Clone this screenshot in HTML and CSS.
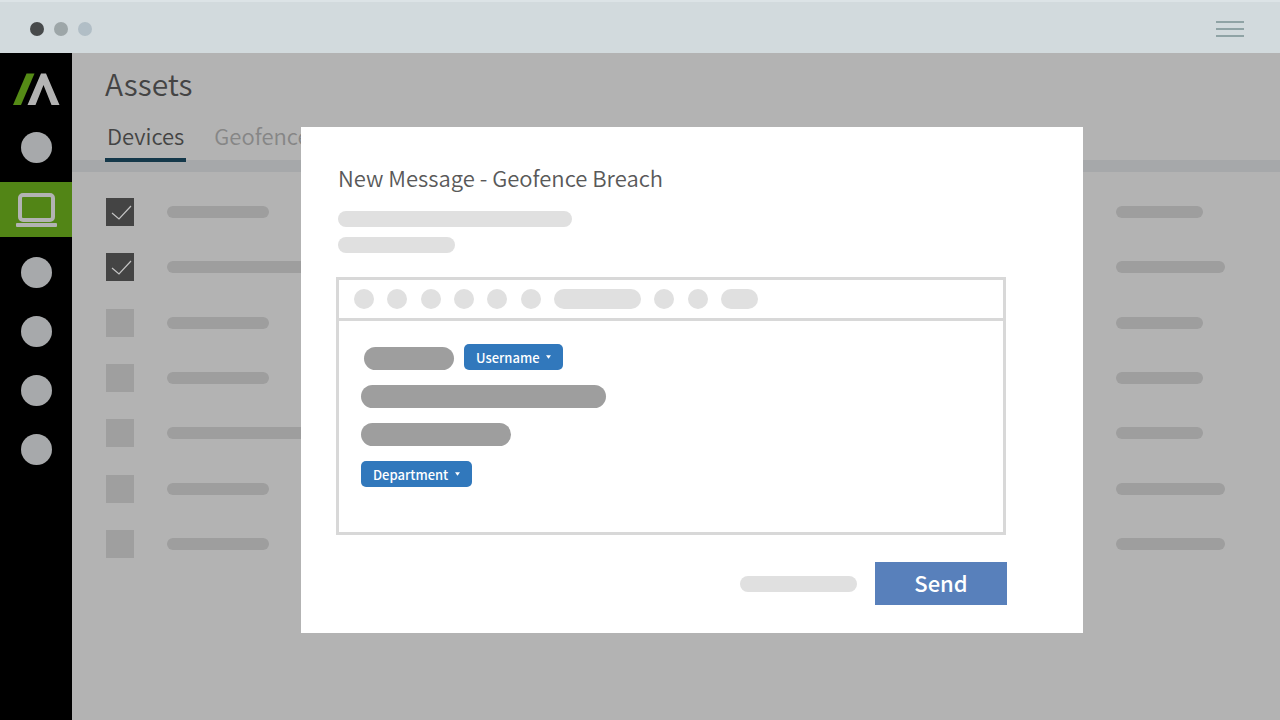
FILE: index.html
```html
<!DOCTYPE html>
<html lang="en">
<head>
<meta charset="utf-8">
<meta name="viewport" content="width=device-width, initial-scale=1">
<title>Assets</title>
<link rel="stylesheet" href="styles.css">
</head>
<body>
<header class="window-bar">
  <div class="window-dots">
    <span class="window-dot window-dot-dark"></span>
    <span class="window-dot window-dot-mid"></span>
    <span class="window-dot window-dot-light"></span>
  </div>
  <button class="menu-button" type="button" aria-label="Menu"><span></span><span></span><span></span></button>
</header>
<div class="app">
  <nav class="sidebar" aria-label="Main">
    <svg class="logo" viewBox="0 0 48 32" aria-hidden="true">
      <path fill="#558b16" d="M14.500 0.500h8L9 32H1z"/>
      <path fill="#b3b3b3" d="M29 0.500h5L47.500 32h-8L31.500 12 23.500 32h-8z"/>
    </svg>
    <a class="nav-dot" href="#" aria-label="Home"></a>
    <a class="nav-active" href="#" aria-label="Devices" aria-current="page">
      <svg class="laptop" viewBox="0 0 42 36" aria-hidden="true">
        <rect x="5" y="3" width="33" height="25" rx="3" fill="none" stroke="#b3b3b3" stroke-width="4"/>
        <rect x="1" y="31" width="41" height="4" rx="1" fill="#b3b3b3"/>
      </svg>
    </a>
    <div class="nav-group">
      <a class="nav-dot" href="#" aria-label="Reports"></a>
      <a class="nav-dot" href="#" aria-label="Policies"></a>
      <a class="nav-dot" href="#" aria-label="Users"></a>
      <a class="nav-dot" href="#" aria-label="Settings"></a>
    </div>
  </nav>
  <main class="page">
    <h1 class="page-title">Assets</h1>
    <div class="tabs">
      <a class="tab tab-current" href="#">Devices</a>
      <a class="tab" href="#">Geofence</a>
    </div>
    <div class="divider"></div>
    <ul class="rows">
      <li class="row"><span class="check"><input type="checkbox" aria-label="Device 1" checked><svg viewBox="0 0 28 28" aria-hidden="true"><path d="M6 15l7 6L25 8"/></svg></span><span class="bar bar-short"></span><span class="bar bar-end"></span></li>
      <li class="row"><span class="check"><input type="checkbox" aria-label="Device 2" checked><svg viewBox="0 0 28 28" aria-hidden="true"><path d="M6 15l7 6L25 8"/></svg></span><span class="bar bar-long"></span><span class="bar bar-end-long"></span></li>
      <li class="row"><span class="check"><input type="checkbox" aria-label="Device 3"></span><span class="bar bar-short"></span><span class="bar bar-end"></span></li>
      <li class="row"><span class="check"><input type="checkbox" aria-label="Device 4"></span><span class="bar bar-short"></span><span class="bar bar-end"></span></li>
      <li class="row"><span class="check"><input type="checkbox" aria-label="Device 5"></span><span class="bar bar-long"></span><span class="bar bar-end"></span></li>
      <li class="row"><span class="check"><input type="checkbox" aria-label="Device 6"></span><span class="bar bar-short"></span><span class="bar bar-end-long"></span></li>
      <li class="row"><span class="check"><input type="checkbox" aria-label="Device 7"></span><span class="bar bar-short"></span><span class="bar bar-end-long"></span></li>
    </ul>
    <div class="overlay">
      <section class="dialog" role="dialog" aria-labelledby="dialog-title">
        <h2 class="dialog-title" id="dialog-title">New Message - Geofence Breach</h2>
        <div class="summary">
          <span class="line line-wide"></span>
          <span class="line line-narrow"></span>
        </div>
        <div class="editor">
          <div class="toolbar">
            <div class="tools">
              <span class="tool"></span><span class="tool"></span><span class="tool"></span>
              <span class="tool"></span><span class="tool"></span><span class="tool"></span>
              <span class="tool tool-wide"></span>
              <span class="tool"></span><span class="tool"></span>
              <span class="tool tool-medium"></span>
            </div>
          </div>
          <div class="message">
            <div class="message-row">
              <span class="words words-greeting"></span>
              <span class="token"><select class="token-username" aria-label="First field"><option>Username</option></select><svg class="caret" viewBox="0 0 6 4" aria-hidden="true"><path d="M0 0h6L3 4z"/></svg></span>
            </div>
            <span class="words words-long"></span>
            <span class="words words-medium"></span>
            <span class="token"><select class="token-department" aria-label="Second field"><option>Department</option></select><svg class="caret" viewBox="0 0 6 4" aria-hidden="true"><path d="M0 0h6L3 4z"/></svg></span>
          </div>
        </div>
        <div class="actions">
          <span class="line line-narrow"></span>
          <button class="send" type="button">Send</button>
        </div>
      </section>
    </div>
  </main>
</div>
</body>
</html>
```
FILE: styles.css
```css
* {
  box-sizing: border-box;
}

body {
  margin: 0;
  min-height: 100vh;
  display: flex;
  flex-direction: column;
  font-family: "Noto Sans CJK SC", "Noto Sans", sans-serif;
  background: #b3b3b3;
}

.window-bar {
  display: flex;
  align-items: center;
  justify-content: space-between;
  height: 53px;
  padding: 2px 36px 0 30px;
  border-top: 2px solid #dce3e6;
  background: #d2dadd;
}

.window-dots {
  display: flex;
  gap: 10px;
}

.window-dot {
  width: 14px;
  height: 14px;
  border-radius: 50%;
}

.window-dot-dark { background: #474a4b; }
.window-dot-mid { background: #9da6a8; }
.window-dot-light { background: #b1bec6; }

.menu-button {
  display: flex;
  flex-direction: column;
  gap: 5px;
  width: 28px;
  padding: 0;
  border: 0;
  background: none;
}

.menu-button span {
  height: 2px;
  background: #8fa3a5;
}

.app {
  display: flex;
  flex: 1;
}

.sidebar {
  display: flex;
  flex-direction: column;
  align-items: center;
  width: 72px;
  padding-top: 20px;
  background: #000;
}

.logo {
  width: 48px;
  height: 32px;
  margin-bottom: 27px;
}

.nav-dot {
  width: 31px;
  height: 31px;
  border-radius: 50%;
  background: #a7a9ab;
}

.nav-active {
  display: flex;
  align-items: center;
  justify-content: center;
  align-self: stretch;
  height: 55px;
  margin: 19px 0 20px;
  background: #528516;
}

.laptop {
  width: 42px;
  height: 36px;
}

.nav-group {
  display: flex;
  flex-direction: column;
  gap: 28px;
}

.page {
  position: relative;
  flex: 1;
  padding-top: 10px;
}

.page-title {
  margin: 0;
  padding-left: 33px;
  font-size: 30px;
  line-height: 40px;
  font-weight: 350;
  color: #444;
}

.tabs {
  display: flex;
  gap: 26px;
  padding-left: 33px;
}

.tab {
  padding: 10px 2px 0;
  font-size: 22px;
  line-height: 45px;
  font-weight: 350;
  color: #868686;
  text-decoration: none;
}

.tab-current {
  position: relative;
  border-bottom: 4px solid #14384a;
  color: #444;
}

.divider {
  height: 12px;
  margin-top: -2px;
  background: #a6a8aa;
}

.rows {
  display: grid;
  grid-template-rows: repeat(7, 1fr);
  height: 388px;
  margin: 12px 0 0;
  padding: 0 55px 0 34px;
  list-style: none;
}

.row {
  display: grid;
  grid-template-columns: 28px 1fr 109px;
  column-gap: 33px;
  align-items: center;
}

.check {
  display: grid;
}

.check input,
.check svg {
  grid-area: 1 / 1;
  width: 28px;
  height: 28px;
  margin: 0;
}

.check input {
  appearance: none;
  background: #9f9f9f;
}

.check input:checked {
  background: #444;
}

.check svg {
  fill: none;
  stroke: #c4c4c4;
  stroke-width: 1.2;
  pointer-events: none;
}

.bar {
  height: 12px;
  border-radius: 6px;
  background: #9e9e9e;
}

.bar-short { width: 102px; }
.bar-long { width: 180px; }
.bar-end { width: 87px; }
.bar-end-long { width: 109px; }

.overlay {
  position: absolute;
  inset: 0;
  display: flex;
  align-items: flex-start;
  padding: 74px 197px 87px 229px;
}

.dialog {
  flex: 1;
  padding: 34px 76px 28px 35px;
  background: #fff;
}

.dialog-title {
  margin: 0;
  padding-left: 2px;
  font-size: 22px;
  line-height: 32px;
  font-weight: 350;
  color: #595959;
}

.summary {
  display: flex;
  flex-direction: column;
  gap: 10px;
  padding: 18px 2px 24px;
}

.line {
  height: 16px;
  border-radius: 8px;
  background: #e0e0e0;
}

.line-wide { width: 234px; }
.line-narrow { width: 117px; }

.editor {
  margin-right: 1px;
  border: 3px solid #d8d8d8;
}

.toolbar {
  padding: 9px 15px;
  border-bottom: 3px solid #d8d8d8;
}

.tools {
  display: flex;
  justify-content: space-between;
  max-width: 404px;
}

.tool {
  width: 20px;
  height: 20px;
  border-radius: 10px;
  background: #e0e0e0;
}

.tool-wide { width: 87px; }
.tool-medium { width: 37px; }

.message {
  display: flex;
  flex-direction: column;
  align-items: flex-start;
  gap: 15px;
  min-height: 211px;
  padding: 23px 22px;
}

.message-row {
  display: flex;
  align-items: flex-end;
  gap: 10px;
  padding-left: 3px;
}

.words {
  height: 23px;
  border-radius: 12px;
  background: #9e9e9e;
}

.words-greeting { width: 90px; }
.words-long { width: 245px; }
.words-medium { width: 150px; }

.token {
  display: grid;
  align-items: center;
}

.token select {
  grid-area: 1 / 1;
  appearance: none;
  height: 26px;
  padding: 0 12px;
  border: 0;
  border-radius: 5px;
  background: #3178bc;
  color: #fff;
  font-family: inherit;
  font-size: 13px;
  font-weight: 500;
}

.token .token-username { width: 99px; }
.token .token-department { width: 111px; }

.caret {
  grid-area: 1 / 1;
  justify-self: end;
  width: 5px;
  height: 4px;
  margin-right: 12px;
  fill: #fff;
  pointer-events: none;
}

.actions {
  display: flex;
  align-items: center;
  justify-content: flex-end;
  gap: 18px;
  padding-top: 27px;
}

.send {
  width: 132px;
  height: 43px;
  padding: 0 0 4px;
  border: 0;
  background: #5880bb;
  color: #fff;
  font-family: inherit;
  font-size: 22px;
  font-weight: 500;
}
```
